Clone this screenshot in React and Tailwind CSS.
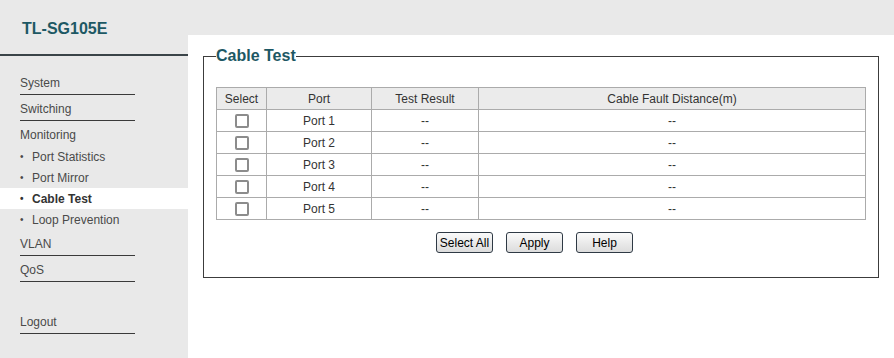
import React from 'react'

const MENU_TOP = ['System', 'Switching']
const SUB = ['Port Statistics', 'Port Mirror', 'Cable Test', 'Loop Prevention']
const PORTS = [1, 2, 3, 4, 5]

function NavItem({ label, line = true, className = '' }) {
  return (
    <div className={`ml-[20px] w-[115px] pt-[7px] pb-[4px] leading-[14px] ${line ? 'border-b border-[#3a3a3a]' : ''} ${className}`}>
      {label}
    </div>
  )
}

function Button({ children }) {
  return (
    <button className="w-[57px] h-[21px] rounded-[3px] border border-[#2f3a45] bg-gradient-to-b from-[#fafafa] to-[#dcdcdc] text-[12px] leading-[14px] text-black">
      {children}
    </button>
  )
}

export default function App() {
  return (
    <div className="flex w-[894px] h-[358px] bg-[#e9e9e9] text-[12px] text-[#4a4a4a] overflow-hidden"
      style={{ fontFamily: '"Liberation Sans", Arial, sans-serif' }}>
      {/* Sidebar */}
      <aside className="w-[188px] flex-shrink-0">
        <div className="h-[56px] border-b-2 border-[#3a4448] pl-[22px] pt-[19px]">
          <span className="text-[16px] leading-[20px] font-bold text-[#1d5864]">TL-SG105E</span>
        </div>
        <div className="pt-[13px]">
          {MENU_TOP.map(m => <NavItem key={m} label={m} />)}
          <NavItem label="Monitoring" line={false} />
          {SUB.map(s => (
            <div key={s}
              className={`h-[21px] flex items-center pl-[20px] ${s === 'Cable Test' ? 'bg-white font-bold text-[#333]' : ''}`}>
              <span className="w-[12px] text-[10px]">•</span>
              <span>{s}</span>
            </div>
          ))}
          <NavItem label="VLAN" />
          <NavItem label="QoS" />
          <NavItem label="Logout" className="mt-[26px]" />
        </div>
      </aside>

      {/* Main */}
      <main className="flex-1 mt-[35px] bg-white pt-[11px] px-[15px]">
        <fieldset className="border border-[#3c3c3c] px-[12px] pt-[21px] pb-[24px]">
          <legend className="text-[16px] leading-[20px] font-bold text-[#1d5864]">Cable Test</legend>
          <table className="w-full border-collapse text-[12px] text-[#333] text-center">
            <thead>
              <tr className="bg-[#ebebeb]">
                <th className="w-[50px] h-[22px] border border-[#ababab] font-normal">Select</th>
                <th className="w-[105px] border border-[#ababab] font-normal">Port</th>
                <th className="w-[107px] border border-[#ababab] font-normal">Test Result</th>
                <th className="border border-[#ababab] font-normal">Cable Fault Distance(m)</th>
              </tr>
            </thead>
            <tbody>
              {PORTS.map(p => (
                <tr key={p}>
                  <td className="h-[22px] border border-[#ababab]">
                    <div className="mx-auto w-[14px] h-[14px] rounded-[2px] border-2 border-[#8c8c8c]" />
                  </td>
                  <td className="border border-[#ababab]">Port {p}</td>
                  <td className="border border-[#ababab]">--</td>
                  <td className="border border-[#ababab]">--</td>
                </tr>
              ))}
            </tbody>
          </table>
          <div className="flex justify-center gap-[13px] mt-[12px] pr-[13px]">
            <Button>Select All</Button>
            <Button>Apply</Button>
            <Button>Help</Button>
          </div>
        </fieldset>
      </main>
    </div>
  )
}
